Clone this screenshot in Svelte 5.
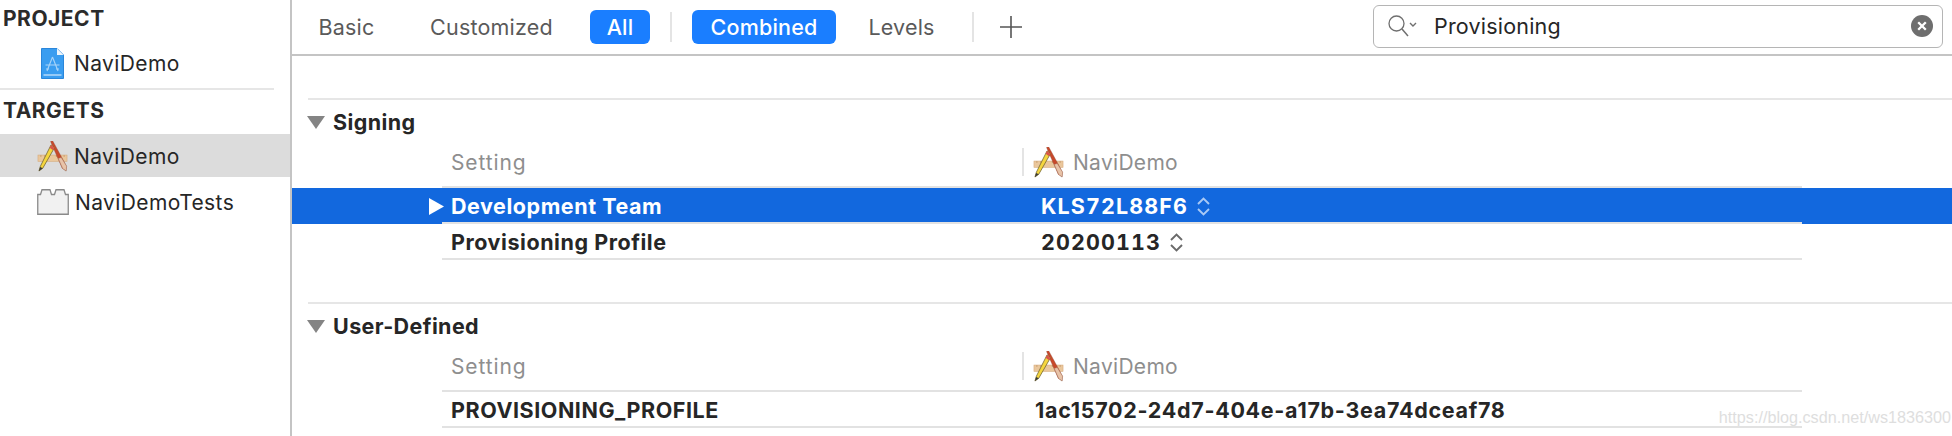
<script lang="ts">
	const tabsLeft = [
		{ label: 'Basic', width: 109 },
		{ label: 'Customized', width: 181 },
		{ label: 'All', width: 60, on: true }
	];
	const tabsRight = [
		{ label: 'Combined', width: 144, on: true },
		{ label: 'Levels', width: 131 }
	];
	const sections: any[] = [
		{
			title: 'Signing',
			rows: [
				{ name: 'Development Team', value: 'KLS72L88F6', selected: true },
				{ name: 'Provisioning Profile', value: '20200113' }
			]
		},
		{
			title: 'User-Defined',
			rows: [{ name: 'PROVISIONING_PROFILE', value: '1ac15702-24d7-404e-a17b-3ea74dceaf78', raw: true }]
		}
	];
</script>

{#snippet hammer(size: number)}
	<svg class="hammer" width={size} height={size} viewBox="0 0 32 32">
		<rect x="1" y="14.5" width="30" height="6.5" fill="#eac79c" stroke="#d6ab7c" stroke-width="0.6" />
		<path d="M4 14.5v2M8 14.5v2M12 14.5v2M20 14.5v2M24 14.5v2M28 14.5v2" stroke="#bb8d60" stroke-width="0.7" />
		<path d="M14 .5 L26 28 L30 31 L30.5 26 L16 -.5 Z" fill="#c8482a" stroke="#8d4a36" stroke-width="0.4" />
		<path d="M22 18 L26.4 28 L30 31 L30.5 26 L25 17 Z" fill="#e8c3a8" stroke="#9a7a66" stroke-width="0.4" />
		<path d="M14.5 4 L3.5 26 L2 31 L6 28 L18 7 Z" fill="#f5d63e" stroke="#6f6230" stroke-width="0.8" />
		<path d="M2 31 L3.2 26.8 L6 28.2 Z" fill="#3a3a3a" />
		<path d="M14.5 4 L18 7 L16.6 9.5 L13 7 Z" fill="#d9564a" />
	</svg>
{/snippet}

{#snippet triangle()}
	<svg class="disclosure" width="18" height="13" viewBox="0 0 18 13"><path d="M0 0H18L9 13Z" fill="#848484" /></svg>
{/snippet}

<div class="window">
	<aside class="sidebar">
		<h3>PROJECT</h3>
		<div class="item first">
			<svg class="file-icon" width="23" height="31" viewBox="0 0 23 31">
				<path d="M.5 .5H16L22.5 7V30.5H.5Z" fill="#3a9df0" stroke="#2b86da" />
				<path d="M16 .5V7H22.5Z" fill="#eef5fb" />
				<path d="M2.5 27H20.5" stroke="#d5eafb" stroke-width="1.2" />
				<path d="M11.5 9 L6 23M11.5 9 L17 23M4.5 17H18.5M8 21H5M15 21H18" stroke="#a9d4f8" stroke-width="1.1" fill="none" />
			</svg>
			<span>NaviDemo</span>
		</div>
		<div class="rule"></div>
		<h3>TARGETS</h3>
		<div class="item target selected">
			{@render hammer(31)}
			<span>NaviDemo</span>
		</div>
		<div class="item target tests">
			<svg class="brick" width="32" height="26" viewBox="0 0 32 26">
				<path d="M.75 25.25V5.5H3.5L5 .75H13L14.5 5.5H17.5L19 .75H27L28.5 5.5H31.25V25.25Z" fill="#f1f1f1" stroke="#8a8a8a" stroke-width="1.3" />
			</svg>
			<span>NaviDemoTests</span>
		</div>
	</aside>

	<main class="content">
		<header class="toolbar">
			{#each tabsLeft as tab}
				<span class="tab" class:on={tab.on} style="width: {tab.width}px">{tab.label}</span>
			{/each}
			<i class="tool-sep"></i>
			{#each tabsRight as tab}
				<span class="tab" class:on={tab.on} style="width: {tab.width}px">{tab.label}</span>
			{/each}
			<i class="tool-sep second"></i>
			<svg class="plus" width="22" height="22" viewBox="0 0 22 22"><path d="M11 0V22M0 11H22" stroke="#555" stroke-width="1.6" /></svg>
			<div class="search">
				<svg width="36" height="24" viewBox="0 0 36 24" fill="none" stroke="#6f6f6f">
					<circle cx="9.5" cy="9.5" r="7.5" stroke-width="1.3" />
					<path d="M15 15L21 22" stroke-width="1.5" />
					<path d="M23 9L26 12L29 9" stroke-width="1.4" />
				</svg>
				<span class="query">Provisioning</span>
				<svg class="clear" width="22" height="22" viewBox="0 0 22 22">
					<circle cx="11" cy="11" r="11" fill="#6e6e6e" />
					<path d="M7.2 7.2L14.8 14.8M14.8 7.2L7.2 14.8" stroke="#fff" stroke-width="2.3" />
				</svg>
			</div>
		</header>

		{#each sections as section}
			<section class="section">
				<div class="section-line"></div>
				<h2>{@render triangle()}<span>{section.title}</span></h2>
				<div class="row-wrap head">
					<div class="cells">
						<span class="setting">Setting</span>
						<span class="target-head">
							{@render hammer(31)}
							<span>NaviDemo</span>
						</span>
					</div>
				</div>
				{#each section.rows as row}
					<div class="row-wrap" class:selected={row.selected}>
						<div class="cells">
							<span class="name">
								{#if row.selected}
									<svg class="arrow" width="15" height="17" viewBox="0 0 15 17"><path d="M0 0L15 8.5L0 17Z" fill="#fff" /></svg>
								{/if}
								{row.name}
							</span>
							<span class="value" class:raw={row.raw}>
								{row.value}
								{#if !row.raw}
									<svg class="stepper" width="13" height="19" viewBox="0 0 13 19" fill="none">
										<path d="M1 7L6.5 1.5L12 7M1 12L6.5 17.5L12 12" stroke-width="1.9" />
									</svg>
								{/if}
							</span>
						</div>
					</div>
				{/each}
			</section>
		{/each}
		<span class="watermark">https://blog.csdn.net/ws1836300</span>
	</main>
</div>

<style>
	:global(body) {
		margin: 0;
		background: #fff;
		font-family: Inter, "Liberation Sans", sans-serif;
		color: #262626;
	}
	.window {
		display: flex;
		width: 1952px;
		height: 436px;
		overflow: hidden;
		background: #fff;
	}
	.sidebar {
		box-sizing: border-box;
		flex: 0 0 292px;
		border-right: 2px solid #c4c4c4;
	}
	h3 {
		margin: 0;
		padding-left: 3px;
		font-size: 21px;
		line-height: 38px;
		font-weight: 700;
		letter-spacing: 0.5px;
		color: #2b2b2b;
	}
	.item {
		display: flex;
		align-items: center;
		box-sizing: border-box;
		font-size: 21px;
		letter-spacing: 0.4px;
	}
	.item.first {
		height: 50px;
		padding-left: 41px;
		gap: 10px;
	}
	.item.target {
		padding-left: 37px;
		gap: 6px;
		height: 43px;
	}
	.item.selected {
		background: #dcdcdc;
		margin-top: 4px;
		padding-top: 2px;
	}
	.item.tests {
		height: 50px;
	}
	.rule {
		width: 274px;
		height: 2px;
		background: #e6e6e6;
	}
	.rule + h3 {
		margin-top: 2px;
	}
	.content {
		position: relative;
		flex: 1;
		min-width: 0;
	}
	.toolbar {
		display: flex;
		align-items: center;
		box-sizing: border-box;
		height: 56px;
		border-bottom: 2px solid #c4c4c4;
		font-size: 21.5px;
	}
	.tab {
		display: flex;
		align-items: center;
		justify-content: center;
		height: 34px;
		border-radius: 6px;
		color: #5a5a5a;
		letter-spacing: 0.2px;
	}
	.tab.on {
		background: #1a7eff;
		color: #fff;
		font-weight: 500;
		margin-left: 8px;
	}
	.tool-sep + .tab.on {
		margin-left: 0;
	}
	.tool-sep {
		width: 2px;
		height: 30px;
		margin: 0 20px;
		background: #e4e4e4;
	}
	.tool-sep.second {
		margin: 0 26px 0 5px;
	}
	.plus {
		flex: none;
	}
	.search {
		display: flex;
		align-items: center;
		box-sizing: border-box;
		width: 570px;
		height: 43px;
		margin-left: auto;
		margin-right: 9px;
		margin-top: -2px;
		padding: 0 9px 0 13px;
		border: 1px solid #b5b5b5;
		border-radius: 6px;
	}
	.search svg {
		flex: none;
	}
	.query {
		flex: 1;
		margin-left: 11px;
		color: #262626;
		letter-spacing: 0.2px;
	}
	.section {
		margin-top: 42px;
	}
	.section-line {
		height: 2px;
		margin-left: 16px;
		background: #e6e6e6;
	}
	h2 {
		display: flex;
		align-items: center;
		margin: 0;
		height: 44px;
		padding-left: 15px;
		font-size: 21.5px;
		font-weight: 700;
		color: #262626;
		letter-spacing: 0.4px;
	}
	h2 span {
		margin-left: 8px;
	}
	.disclosure {
		flex: none;
	}
	.row-wrap {
		height: 36px;
		padding-left: 150px;
	}
	.row-wrap.selected {
		background: #1268de;
		color: #fff;
	}
	.row-wrap.head {
		height: 44px;
	}
	.cells {
		display: grid;
		grid-template-columns: 580px 1fr;
		box-sizing: border-box;
		width: 1360px;
		height: 100%;
		align-items: center;
		padding-top: 2px;
		border-bottom: 2px solid #e2e2e2;
		font-size: 21.5px;
		font-weight: 700;
	}
	.head .cells {
		font-weight: 400;
		font-size: 21px;
		color: #8e8e8e;
		padding-top: 0;
		padding-bottom: 6px;
	}
	.setting {
		padding-left: 9px;
		letter-spacing: 0.9px;
	}
	.target-head {
		display: flex;
		align-items: center;
		gap: 9px;
		height: 28px;
		padding-left: 9px;
		border-left: 2px solid #e4e4e4;
		letter-spacing: 0.3px;
	}
	.name {
		display: flex;
		align-items: center;
		padding-left: 9px;
		letter-spacing: 0.55px;
	}
	.arrow {
		margin-left: -22px;
		margin-right: 7px;
	}
	.value {
		display: flex;
		align-items: center;
		gap: 9px;
		padding-left: 19px;
		letter-spacing: 1.1px;
		font-variant-numeric: tabular-nums;
	}
	.value.raw {
		padding-left: 13px;
		letter-spacing: 0.7px;
		font-variant-numeric: normal;
	}
	.stepper {
		stroke: #6a6a6a;
	}
	.selected .stepper {
		stroke: #a9c9f5;
	}
	.watermark {
		position: absolute;
		right: 1px;
		top: 408px;
		font-size: 16.2px;
		color: #dedede;
		font-family: "Liberation Sans", sans-serif;
	}
</style>
